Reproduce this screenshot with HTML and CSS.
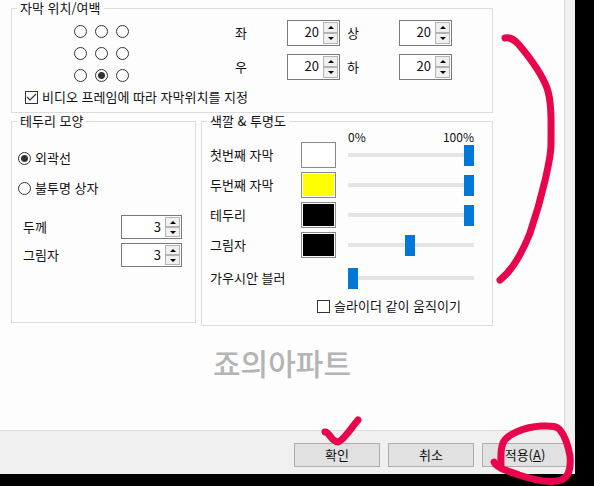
FILE: index.html
```html
<!DOCTYPE html>
<html lang="ko">
<head>
  <meta charset="UTF-8" />
  <meta name="viewport" content="width=device-width, initial-scale=1.0"/>
  <title>자막 설정</title>
  <link rel="stylesheet" href="styles.css">
</head>
<body>
  <form class="dialog">
    <div class="panel">
      <fieldset class="group position">
        <legend>자막 위치/여백</legend>
        <div class="position-row">
          <div class="anchor-grid">
            <input type="radio" name="anchor" aria-label="왼쪽 위">
            <input type="radio" name="anchor" aria-label="위">
            <input type="radio" name="anchor" aria-label="오른쪽 위">
            <input type="radio" name="anchor" aria-label="왼쪽">
            <input type="radio" name="anchor" aria-label="가운데">
            <input type="radio" name="anchor" aria-label="오른쪽">
            <input type="radio" name="anchor" aria-label="왼쪽 아래">
            <input type="radio" name="anchor" aria-label="아래" checked>
            <input type="radio" name="anchor" aria-label="오른쪽 아래">
          </div>
          <div class="margin-grid">
            <label for="left">좌</label>
            <div class="spinner">
              <input type="text" id="left" value="20">
              <div class="arrows"><button type="button" class="up" aria-label="증가"></button><button type="button" class="down" aria-label="감소"></button></div>
            </div>
            <label for="top">상</label>
            <div class="spinner">
              <input type="text" id="top" value="20">
              <div class="arrows"><button type="button" class="up" aria-label="증가"></button><button type="button" class="down" aria-label="감소"></button></div>
            </div>
            <label for="right">우</label>
            <div class="spinner">
              <input type="text" id="right" value="20">
              <div class="arrows"><button type="button" class="up" aria-label="증가"></button><button type="button" class="down" aria-label="감소"></button></div>
            </div>
            <label for="bottom">하</label>
            <div class="spinner">
              <input type="text" id="bottom" value="20">
              <div class="arrows"><button type="button" class="up" aria-label="증가"></button><button type="button" class="down" aria-label="감소"></button></div>
            </div>
          </div>
        </div>
        <label class="check frame-check"><input type="checkbox" checked>비디오 프레임에 따라 자막위치를 지정</label>
      </fieldset>

      <fieldset class="group outline">
        <legend>테두리 모양</legend>
        <label class="option"><input type="radio" name="shape" checked>외곽선</label>
        <label class="option"><input type="radio" name="shape">불투명 상자</label>
        <div class="sizes">
          <label for="thickness">두께</label>
          <div class="spinner small">
            <input type="text" id="thickness" value="3">
            <div class="arrows"><button type="button" class="up" aria-label="증가"></button><button type="button" class="down" aria-label="감소"></button></div>
          </div>
          <label for="shadow">그림자</label>
          <div class="spinner small">
            <input type="text" id="shadow" value="3">
            <div class="arrows"><button type="button" class="up" aria-label="증가"></button><button type="button" class="down" aria-label="감소"></button></div>
          </div>
        </div>
      </fieldset>

      <fieldset class="group colors">
        <legend>색깔 &amp; 투명도</legend>
        <div class="scale"><span>0%</span><span>100%</span></div>
        <div class="color-row">
          <label for="alpha1">첫번째 자막</label>
          <button type="button" class="swatch white" aria-label="첫번째 자막 색깔"></button>
          <input type="range" id="alpha1" value="100">
        </div>
        <div class="color-row">
          <label for="alpha2">두번째 자막</label>
          <button type="button" class="swatch yellow" aria-label="두번째 자막 색깔"></button>
          <input type="range" id="alpha2" value="100">
        </div>
        <div class="color-row">
          <label for="alpha3">테두리</label>
          <button type="button" class="swatch black" aria-label="테두리 색깔"></button>
          <input type="range" id="alpha3" value="100">
        </div>
        <div class="color-row">
          <label for="alpha4">그림자</label>
          <button type="button" class="swatch black" aria-label="그림자 색깔"></button>
          <input type="range" id="alpha4" value="49">
        </div>
        <div class="color-row blur">
          <label for="blur">가우시안 블러</label>
          <input type="range" id="blur" value="0">
        </div>
        <label class="check link-check"><input type="checkbox">슬라이더 같이 움직이기</label>
      </fieldset>

      <p class="watermark">죠의아파트</p>
    </div>

    <div class="footer">
      <button type="button" class="btn">확인</button>
      <button type="button" class="btn">취소</button>
      <button type="button" class="btn">적용(<u>A</u>)</button>
    </div>
  </form>

  <!-- red pen marks -->
  <svg class="marks" width="594" height="486" viewBox="0 0 594 486" aria-hidden="true">
    <path d="M505 38 C511 37 515 40 520 46 C530 58 541 72 547 88 C552 102 551 124 551 144 C551 158 542 198 530 233 C522 253 513 270 500 280"/>
    <path d="M325 432 C329 431 331 442 338 442 C344 440 351 428 358 420"/>
    <path d="M494 462 C496 468 509 471 519 475 C534 480 550 484 561 480 C569 477 571 467 570 456 C568 445 565 436 560 430 C557 425 549 426 541 426 C525 427 507 434 503 443 C500 450 501 458 501 466"/>
  </svg>
</body>
</html>
```
FILE: styles.css
```css
* {
  box-sizing: border-box;
}

body {
  margin: 0;
  min-height: 100vh;
  padding: 0 19px 12px 0;
  display: flex;
  background: #000;
  color: #111;
  font-family: "Noto Sans CJK KR", sans-serif;
  font-size: 13px;
  line-height: 16px;
}

button, input {
  font: inherit;
  color: inherit;
  margin: 0;
}

.dialog {
  flex: 1;
  display: flex;
  flex-direction: column;
  background: #f0f0f0;
}

.panel {
  flex: 1;
  margin-right: 10px;
  padding: 0 71px 0 11px;
  display: grid;
  grid-template-columns: 185px 1fr;
  grid-template-rows: auto auto 1fr;
  column-gap: 5px;
  align-items: start;
  background: #fdfdfd;
  border-right: 1px solid #dcdcdc;
  border-bottom: 1px solid #dcdcdc;
}

/* group boxes */
.group {
  min-width: 0;
  margin: 0;
  padding: 0;
  border: 1px solid #dcdcdc;
}

.group legend {
  margin-left: 5px;
  padding: 0 3px;
}

.position {
  grid-column: 1 / 3;
  padding-bottom: 4px;
}

.position-row {
  display: flex;
  align-items: flex-start;
}

.anchor-grid {
  margin-left: 58px;
  padding-top: 4px;
  display: grid;
  grid-template-columns: repeat(3, 21px);
  grid-auto-rows: 22px;
  place-items: center;
}

.margin-grid {
  margin-left: 102px;
  display: grid;
  grid-template-columns: 52px 60px 52px 53px;
  grid-auto-rows: 34px;
  align-items: center;
}

/* radio and check boxes */
input[type="radio"], input[type="checkbox"] {
  appearance: none;
  flex: none;
  width: 13px;
  height: 13px;
  border: 1px solid #333;
  background: #fff;
}

input[type="radio"] {
  border-radius: 50%;
}

input[type="radio"]:checked {
  background: radial-gradient(circle, #333 3px, #fff 4px);
}

input[type="checkbox"]:checked {
  background: url("data:image/svg+xml,%3Csvg xmlns='http://www.w3.org/2000/svg' viewBox='0 0 11 11'%3E%3Cpath d='M1 5l3 3 6-6' fill='none' stroke='%23333' stroke-width='1.2'/%3E%3C/svg%3E") #fff;
}

.check, .option {
  display: flex;
  align-items: center;
  gap: 4px;
}

.frame-check {
  height: 22px;
  margin-left: 13px;
}

/* number boxes */
.spinner {
  display: flex;
  width: 53px;
  height: 26px;
  padding: 1px;
  border: 1px solid #7a7a7a;
  background: #fff;
}

.spinner input {
  flex: 1;
  min-width: 0;
  height: 18px;
  padding: 0 4px 0 0;
  border: none;
  background: none;
  text-align: right;
}

.spinner.small {
  width: 61px;
  height: 24px;
}

.arrows {
  display: flex;
  flex-direction: column;
  width: 15px;
}

.arrows button {
  flex: 1;
  display: flex;
  align-items: center;
  justify-content: center;
  padding: 0;
  border: 1px solid #b4b4b4;
  background: #f0f0f0;
}

.arrows button::before {
  content: "";
  border: 3px solid transparent;
}

.arrows .up::before {
  border-top: none;
  border-bottom-color: #000;
}

.arrows .down::before {
  border-bottom: none;
  border-top-color: #000;
}

/* outline */
.outline {
  height: 210px;
}

.option {
  height: 30px;
  margin-left: 6px;
}

.outline legend + .option {
  margin-top: 14px;
}

.sizes {
  margin: 10px 13px 0 11px;
  display: grid;
  grid-template-columns: 1fr 61px;
  grid-auto-rows: 28px;
  align-items: center;
}

/* colors */
.colors {
  padding: 0 18px 9px 8px;
}

.colors legend {
  margin-left: -3px;
}

.scale {
  height: 11px;
  margin-left: 138px;
  display: flex;
  justify-content: space-between;
  font-size: 12px;
}

.color-row {
  height: 30px;
  display: grid;
  grid-template-columns: 91px 35px 1fr;
  align-items: center;
}

.color-row.blur {
  height: 36px;
}

.swatch {
  height: 26px;
  padding: 1px;
  border: 1px solid #8a8a8a;
  background-clip: content-box;
}

.white {
  background-color: #fff;
}

.yellow {
  background-color: #ff0;
}

.black {
  background-color: #000;
}

input[type="range"] {
  appearance: none;
  grid-column: 3;
  min-width: 0;
  height: 21px;
  margin-left: 12px;
  background: linear-gradient(#e4e4e4, #e4e4e4) center / 100% 4px no-repeat;
}

input[type="range"]::-webkit-slider-thumb {
  appearance: none;
  width: 10px;
  height: 21px;
  background: #0078d7;
}

.link-check {
  height: 20px;
  margin-left: 107px;
}

.watermark {
  grid-column: 1 / 3;
  margin: 16px 0 0 60px;
  color: #b4b4b4;
  font-size: 30px;
  font-weight: 500;
  line-height: 40px;
  text-align: center;
}

/* footer */
.footer {
  display: flex;
  justify-content: flex-end;
  gap: 8px;
  padding: 12px 7px 7px;
}

.btn {
  width: 86px;
  height: 24px;
  padding: 0;
  border: 1px solid #adadad;
  background: #e1e1e1;
}

.marks {
  position: absolute;
  top: 0;
  left: 0;
  pointer-events: none;
}

.marks path {
  fill: none;
  stroke: #e8054b;
  stroke-width: 7;
  stroke-linecap: round;
  stroke-linejoin: round;
}
```
